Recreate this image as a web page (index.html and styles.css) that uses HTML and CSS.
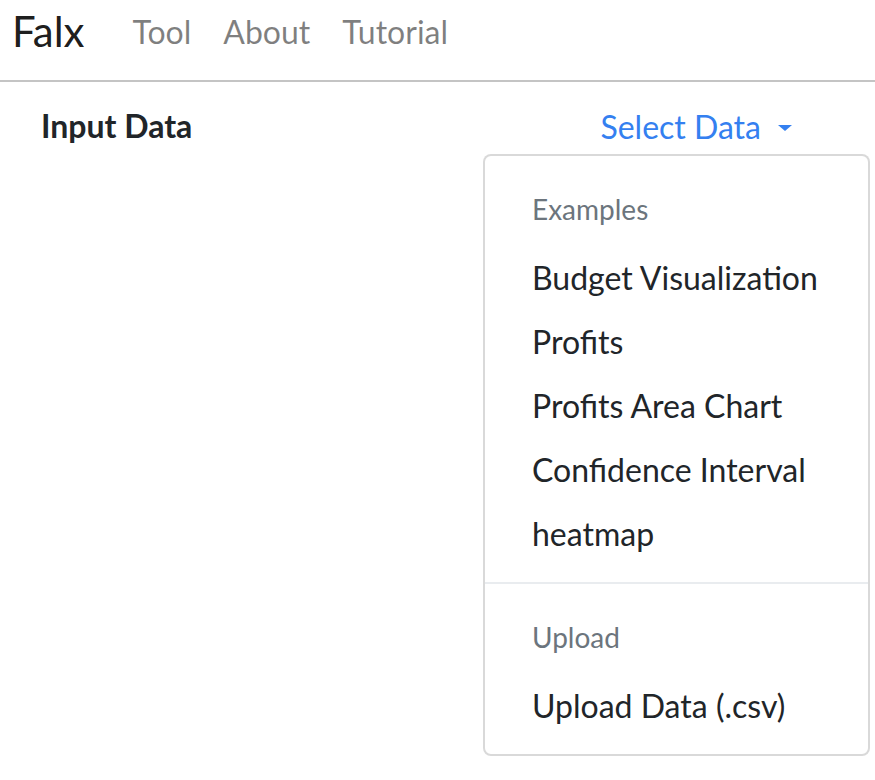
FILE: index.html
```html
<!DOCTYPE html>
<html lang="en">
<head>
<meta charset="utf-8">
<title>Falx</title>
<link rel="stylesheet" href="styles.css">
</head>
<body>
<nav class="navbar">
  <a class="brand" href="#">Falx</a>
  <ul class="nav">
    <li><a class="nav-link" href="#">Tool</a></li>
    <li><a class="nav-link" href="#">About</a></li>
    <li><a class="nav-link" href="#">Tutorial</a></li>
  </ul>
</nav>
<main class="content">
  <div class="data-row">
    <h2 class="title">Input Data</h2>
    <div class="dropdown">
      <button class="btn-link" type="button">Select Data<span class="caret"></span></button>
      <div class="dropdown-menu">
        <h6 class="dropdown-header">Examples</h6>
        <a class="dropdown-item" href="#">Budget Visualization</a>
        <a class="dropdown-item" href="#">Profits</a>
        <a class="dropdown-item" href="#">Profits Area Chart</a>
        <a class="dropdown-item" href="#">Confidence Interval</a>
        <a class="dropdown-item" href="#">heatmap</a>
        <div class="dropdown-divider"></div>
        <h6 class="dropdown-header">Upload</h6>
        <a class="dropdown-item" href="#">Upload Data (.csv)</a>
      </div>
    </div>
  </div>
</main>
</body>
</html>
```
FILE: styles.css
```css
* { box-sizing: border-box; }
html, body {
  margin: 0;
  padding: 0;
  background: #fff;
  font-family: Lato, "Open Sans", "Liberation Sans", sans-serif;
  color: #212529;
}
a { text-decoration: none; }

.navbar {
  height: 82px;
  border-bottom: 2px solid #c4c4c4;
  display: flex;
  align-items: flex-start;
  padding-left: 12px;
}
.brand {
  font-size: 42px;
  line-height: 60px;
  margin-top: 0.5px;
  margin-right: 32px;
  color: rgba(0, 0, 0, 0.9);
}
.nav {
  list-style: none;
  margin: 0;
  padding: 0;
  display: flex;
}
.nav-link {
  display: block;
  font-size: 32px;
  line-height: 48px;
  margin-top: 7.6px;
  padding: 0 16px;
  color: rgba(0, 0, 0, 0.5);
}

.content {
  padding: 20px 0 0 41px;
}
.data-row {
  display: flex;
  align-items: flex-start;
}
.title {
  margin: 0;
  font-size: 32px;
  line-height: 48px;
  font-weight: 700;
  color: #212529;
}
.dropdown {
  margin-left: auto;
  margin-right: 59px;
}
.btn-link {
  display: flex;
  align-items: center;
  background: none;
  border: 0;
  padding: 0 24px;
  margin-top: 0.5px;
  font-family: inherit;
  font-size: 32px;
  line-height: 48px;
  color: #3480f0;
  cursor: pointer;
}
.caret {
  display: inline-block;
  width: 0;
  height: 0;
  margin-left: 17px;
  margin-top: 3px;
  border-top: 6.5px solid #3480f0;
  border-left: 7.5px solid transparent;
  border-right: 7.5px solid transparent;
}

.dropdown-menu {
  position: absolute;
  left: 483px;
  top: 154px;
  width: 387px;
  padding: 16px 0;
  background: #fff;
  border: 2px solid rgba(0, 0, 0, 0.15);
  border-radius: 8px;
}
.dropdown-header {
  margin: 0;
  padding: 16px 47px;
  font-size: 28px;
  line-height: 42px;
  font-weight: 400;
  color: #6c757d;
}
.dropdown-item {
  display: block;
  padding: 8px 47px;
  font-size: 32px;
  line-height: 48px;
  color: #212529;
  white-space: nowrap;
}
.dropdown-divider {
  margin: 16px 0;
  border-top: 2px solid #e9ecef;
}
```
